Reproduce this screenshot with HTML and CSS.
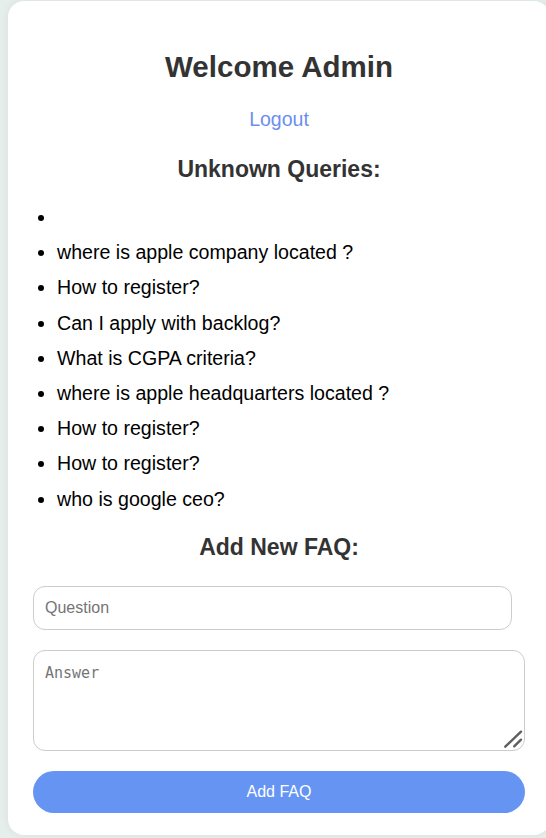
FILE: index.html
```html
<!DOCTYPE html>
<html>
<head>
<meta charset="utf-8">
<title>Admin</title>
<link rel="stylesheet" href="styles.css">
</head>
<body>
<div class="card">
  <h2 class="title">Welcome Admin</h2>
  <p class="logout-row"><a class="logout" href="#">Logout</a></p>
  <h3 class="section-title">Unknown Queries:</h3>
  <ul class="queries">
    <li></li>
    <li>where is apple company located ?</li>
    <li>How to register?</li>
    <li>Can I apply with backlog?</li>
    <li>What is CGPA criteria?</li>
    <li>where is apple headquarters located ?</li>
    <li>How to register?</li>
    <li>How to register?</li>
    <li>who is google ceo?</li>
  </ul>
  <h3 class="section-title faq-title">Add New FAQ:</h3>
  <form class="faq-form">
    <input class="field" type="text" placeholder="Question">
    <div class="area-wrap">
      <textarea class="area" placeholder="Answer"></textarea>
      <svg class="grip" width="20" height="20" viewBox="0 0 20 20" aria-hidden="true">
        <line x1="2.3" y1="17.7" x2="18" y2="2.7" />
        <line x1="11.2" y1="17.3" x2="18" y2="10.7" />
      </svg>
    </div>
    <button class="btn" type="button">Add FAQ</button>
  </form>
</div>
</body>
</html>
```
FILE: styles.css
```css
html, body {
  overflow: hidden;
}
body {
  margin: 0;
  padding: 1px 0 0 8px;
  background: #e6eeeb;
  font-family: "Liberation Sans", Arial, sans-serif;
  color: #000;
  width: 546px;
  height: 838px;
  box-sizing: border-box;
}
.card {
  width: 542px;
  box-sizing: border-box;
  background: #fff;
  border-radius: 16px;
  padding: 25px 25px 22px;
  box-shadow: 0 0 8px rgba(0, 0, 0, 0.06);
}
.title {
  margin: 24px 0 25px;
  font-size: 29.5px;
  line-height: 33px;
  font-weight: bold;
  color: #333;
  text-align: center;
}
.logout-row {
  margin: 0;
  text-align: center;
  font-size: 19.5px;
  line-height: 22px;
}
.logout {
  color: #6b8ef0;
  text-decoration: none;
}
.section-title {
  margin: 26px 0 18px;
  font-size: 23px;
  line-height: 26px;
  font-weight: bold;
  color: #333;
  text-align: center;
}
.faq-title {
  margin: 17px 0 26px;
}
.queries {
  margin: 0;
  padding-left: 24px;
  font-size: 19.6px;
}
.queries li {
  padding: 6px 0;
  line-height: 23.2px;
}
.faq-form {
  display: flex;
  flex-direction: column;
  align-items: flex-start;
  gap: 20px;
}
.field {
  width: 479px;
  height: 44px;
  box-sizing: border-box;
  border: 1px solid #ccc;
  border-radius: 12px;
  padding: 0 11px;
  font-family: "Liberation Sans", Arial, sans-serif;
  font-size: 16px;
  margin: 0;
}
.field::placeholder {
  color: #757575;
}
.area-wrap {
  position: relative;
  width: 492px;
  height: 101px;
}
.area {
  display: block;
  width: 492px;
  height: 101px;
  box-sizing: border-box;
  border: 1px solid #ccc;
  border-radius: 12px;
  padding: 13px 11px;
  margin: 0;
  font-family: "DejaVu Sans Mono", monospace;
  font-size: 15px;
  resize: none;
}
.area::placeholder {
  color: #757575;
}
.grip {
  position: absolute;
  right: 2px;
  bottom: 2px;
  pointer-events: none;
}
.grip line {
  stroke: #5f5f5f;
  stroke-width: 2.4;
  stroke-linecap: round;
}
.btn {
  width: 492px;
  height: 42px;
  border: none;
  border-radius: 21px;
  background: #6594f2;
  color: #fff;
  font-family: "Liberation Sans", Arial, sans-serif;
  font-size: 16px;
  margin: 0;
  padding: 0;
}
```
